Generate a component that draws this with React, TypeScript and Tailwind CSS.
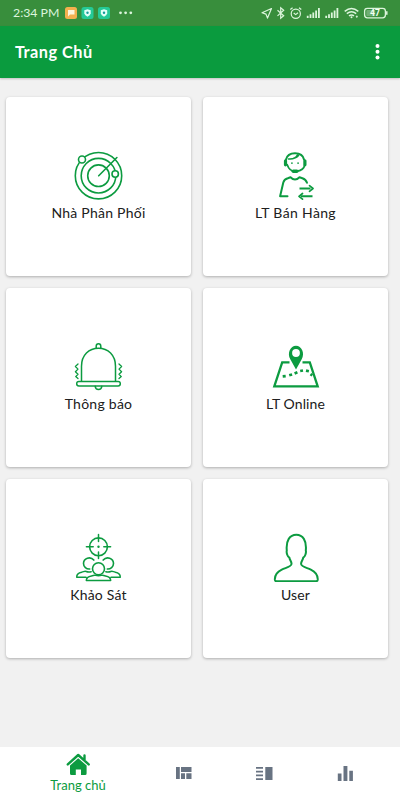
import type { ReactNode } from "react";

function Status() {
  return (
    <header className="flex h-[26px] shrink-0 items-center bg-[#388e3c] pl-[13px] text-[#dcf5dc]">
      <span className="w-[47px] whitespace-nowrap text-[12.3px] leading-none">2:34 PM</span>
      <svg className="ml-[4px] h-[14px] w-[78px]" viewBox="64 6 78 14">
        <rect x="65" y="7" width="12" height="12" rx="2.5" fill="#f4b04f" />
        <path d="M68 10h6.5v4.5h-4.5l-2 2z" fill="#fff5dc" />
        <rect x="81.500" y="7" width="12" height="12" rx="2.5" fill="#24c996" />
        <path d="M84.300 10.200l3.200-1 3.200 1v3.300q-.5 2-3.200 3.200-2.700-1.200-3.200-3.200z" fill="#e2fff8" />
        <circle cx="87.500" cy="12.800" r="1.200" fill="#149b9b" />
        <rect x="98" y="7" width="12" height="12" rx="2.500" fill="#24c996" />
        <path d="M100.800 10.200l3.200-1 3.200 1v3.300q-.5 2-3.200 3.200-2.700-1.200-3.200-3.200z" fill="#e2fff8" />
        <circle cx="104" cy="12.800" r="1.200" fill="#149b9b" />
        <g fill="#dcf5dc"><circle cx="120.500" cy="12.800" r="1.400" /><circle cx="125.600" cy="12.800" r="1.400" /><circle cx="130.800" cy="12.800" r="1.400" /></g>
      </svg>
      <svg className="ml-auto mr-[10px] h-[16px] w-[130px]" viewBox="260 5 130 16" fill="none" stroke="#dcf5dc" strokeWidth="1.2">
        <path d="M271.500 8.500l-9.500 4.300 4 1.300 1.500 4z" strokeLinejoin="round" />
        <path d="M277.500 10.200l6.200 5.600-3 2.500V7.800l3 2.500-6.200 5.600" />
        <circle cx="295.800" cy="13.800" r="4.600" />
        <path d="M290.300 9.500l2.300-1.800M301.300 9.500L299 7.700M293.700 13l2 1.600 2.300-1.800" />
        <path d="M307.700 15.800v2.200M310.500 14.300V18M313.300 12.500V18M316.100 10.500V18M318.900 8V18M326.200 15.800v2.200M329 14.300V18M331.800 12.500V18M334.600 10.500V18M337.400 8V18" strokeWidth="1.800" />
        <path d="M344.700 11.300q6.800-5.400 13.600 0M346.800 13.600q4.700-3.600 9.400 0M349 15.800q2.500-1.800 5 0" strokeWidth="1.500" />
        <circle cx="351.500" cy="17.300" r="1" fill="#dcf5dc" stroke="none" />
        <path d="M355.800 16.500h2M356.800 15.500v2.500" strokeWidth=".8" />
        <rect x="364.600" y="8.300" width="20.800" height="9.500" rx="2.800" strokeWidth="1.300" />
        <rect x="366.300" y="10" width="9" height="6.200" rx="1" fill="#6fae72" stroke="none" />
        <path d="M386.800 11.200v3.600" strokeWidth="1.500" />
        <text x="375" y="16" textAnchor="middle" fill="#f2fff2" stroke="none" fontSize="8.500" fontWeight="700" fontFamily="Roboto, sans-serif">47</text>
      </svg>
    </header>
  );
}

function Icon({ box, children }: { box: string; children: ReactNode }) {
  return (
    <svg className="h-[49px] w-[49px] shrink-0" viewBox={box} fill="none" stroke="#0c9b40" strokeWidth="1.600" strokeLinecap="round" strokeLinejoin="round">
      {children}
    </svg>
  );
}

const radar = (
  <Icon box="74 151 49 49">
    <circle cx="98.500" cy="175.700" r="23.200" />
    <circle cx="98.500" cy="175.700" r="17.300" />
    <circle cx="98.500" cy="175.700" r="10.800" />
    <path d="M98.700 175.800l18.200-18.300" />
    <circle cx="82" cy="159.500" r="3.500" fill="white" />
    <circle cx="115.200" cy="174" r="3.200" fill="white" />
  </Icon>
);

const agent = (
  <Icon box="271 151 49 49">
    <path d="M286 159.500C287 155.300 290.800 153.200 295 153.200s8.100 2.100 9 6.300" strokeWidth="2" />
    <path d="M287.200 164.500c.8 3 2.400 5 4.700 6.200M288.500 159c4.200.4 7.700-1.500 9-4.100M293.500 158.300c2.700-.3 4.500-1.800 5.200-3.300" strokeWidth="1.500" />
    <path d="M285.500 160.800v4M304.900 160.800v4" strokeWidth="3.200" />
    <path d="M304.900 164.500c-.8 4-3.600 6.400-8.500 6.700" strokeWidth="1.700" />
    <path d="M293.300 171.200h3.500" strokeWidth="3.500" />
    <path d="M291 163.200h1.800M297.200 163.200h1.800" strokeWidth="1.300" strokeLinecap="butt" />
    <path d="M287.500 196.300h-7.400l3.200-13.800c.7-2.600 2.300-3.600 4.500-4.200l2.700-1q4.500 4.400 9 0l2.900 1c2.400.8 3.800 2 4.600 4.500" strokeWidth="2" />
    <path d="M299.500 188.500h11M301 196.300h11.500" strokeWidth="2" strokeLinecap="butt" />
    <path d="M309.500 185.700l3.500 2.800-3.500 2.800M302.500 193.500l-3.500 2.800 3.500 2.800" strokeWidth="1.700" />
  </Icon>
);

const bell = (
  <Icon box="74 342 49 49">
    <path d="M81.500 381v-14.800c0-11 7.500-18 17-18s17 7 17 18V381M96.200 347.800v-1.500q0-2.500 2.300-2.500t2.300 2.500v1.500M95.200 386.200q.3 3.300 3.300 3.300t3.300-3.300" strokeWidth="1.500" />
    <rect x="76.700" y="381.400" width="43.600" height="4.600" rx="2.200" strokeWidth="1.500" />
    <path d="M78 364l-2.600 2.500 2.600 2.600-2.600 2.700 2.600 2.500-2.300 2.300 2.300 2M119 364l2.600 2.500-2.600 2.600 2.600 2.700-2.600 2.500 2.300 2.300-2.300 2" strokeWidth="1.300" />
  </Icon>
);

const map = (
  <Icon box="271 342 49 49">
    <path d="M289.500 362.300h-7.300L274.300 386.300h43.400l-7.900-24h-7.300" strokeWidth="2.300" strokeLinecap="butt" strokeLinejoin="miter" />
    <path d="M296 369.500l-5.700-10.200c-3.500-6 .1-13.500 5.700-13.500s9.200 7.500 5.700 13.500zM299.900 353a3.900 3.900 0 1 0-7.800 0 3.900 3.900 0 0 0 7.800 0" fill="#0c9b40" fillRule="evenodd" stroke="none" />
    <path d="M282.700 376.400l3-.3M289.200 375.300l2.900-.8M294.600 373.500l2.800-1.200M300.200 371l2.800-.5M306 370.600l2.900.7M310.500 374.200l1.800 1.300" strokeWidth="2.700" strokeLinecap="butt" />
  </Icon>
);

const target = (
  <Icon box="74 533 49 49">
    <circle cx="98.500" cy="546.800" r="8.900" />
    <path d="M98.500 534.500v7M98.500 552v6.500M86.400 546.800h6.800M103.800 546.800h6.800" strokeWidth="1.500" />
    <circle cx="98.500" cy="546.800" r="1.200" fill="#0c9b40" stroke="none" />
    <circle cx="98.500" cy="568.700" r="6" />
    <path d="M89.700 569c-3.300.3-6.200-2.200-6.200-5.500 0-5.200 6.800-7.600 10.300-3.400M107.300 569c3.300.3 6.200-2.200 6.200-5.500 0-5.200-6.800-7.600-10.300-3.400" />
    <path d="M86 577.300h-9.300c-.1-3.200 1.600-4.600 5-5.100 2-.3 2.700-1.400 4.500-.7 1.700.7 3.300.7 5 .2M111 577.300h9.300c.1-3.200-1.600-4.600-5-5.100-2-.3-2.700-1.400-4.500-.7-1.700.7-3.300.7-5 .2M86.300 580.500c0-2.900 1.800-4 5.200-4.500 2-.3 2.400-1.200 4-.6 2 .6 4 .6 6 0 1.600-.6 2 .3 4 .6 3.400.5 5.200 1.600 5.200 4.500z" strokeWidth="1.450" />
  </Icon>
);

const user = (
  <Icon box="271 533 49 49">
    <path d="M291.500 564c.2-2.200-1.600-3.500-2.100-6.300-2-1.200-3.200-4.900-2.600-7.200-1-10 3-15.700 9.500-15.700s10.500 5.700 9.500 15.700c.6 2.300-.6 6-2.600 7.200-.5 2.800-2.300 4.100-2.100 6.300.2 2.700 5.400 3.600 9.700 5.600 5.200 2.500 7.200 6.300 6.900 10.300-.1.900-.7 1.300-1.600 1.300h-39.600c-.9 0-1.500-.4-1.600-1.300-.3-4 1.700-7.800 6.900-10.300 4.300-2 9.500-2.900 9.700-5.600z" strokeWidth="2" />
  </Icon>
);

function Card({ label, icon, spacing = "" }: { label: string; icon: ReactNode; spacing?: string }) {
  return (
    <section className="flex flex-col items-center rounded-[4px] bg-white pt-[54px] shadow-[0_1px_3px_rgba(0,0,0,0.28)]">
      {icon}
      <h2 className={`mt-[3px] whitespace-nowrap text-[14px] leading-5 text-[#202020] ${spacing}`}>{label}</h2>
    </section>
  );
}

export default function App() {
  return (
    <div className="flex h-[800px] w-[400px] flex-col overflow-hidden bg-[#f1f1f1] font-['Lato','Open_Sans',sans-serif]">
      <Status />
      <div className="flex h-[52px] shrink-0 items-center bg-[#0a9b3e] pl-[15px] text-white shadow-[0_1px_2px_rgba(0,0,0,0.2)]">
        <h1 className="text-[16.300px] font-bold tracking-[0.500px]">Trang Chủ</h1>
        <svg className="ml-auto mr-[18px] h-5 w-[9px]" viewBox="0 0 9 20" fill="white">
          <circle cx="4.500" cy="4" r="2" /><circle cx="4.500" cy="9.800" r="2" /><circle cx="4.500" cy="15.600" r="2" />
        </svg>
      </div>
      <main className="grid flex-1 auto-rows-[179px] grid-cols-[185px_185px] content-start gap-3 pl-1.5 pt-[19px]">
        <Card label="Nhà Phân Phối" icon={radar} spacing="tracking-[0.25px]" />
        <Card label="LT Bán Hàng" icon={agent} spacing="tracking-[0.35px]" />
        <Card label="Thông báo" icon={bell} spacing="tracking-[0.25px]" />
        <Card label="LT Online" icon={map} spacing="tracking-[0.1px]" />
        <Card label="Khảo Sát" icon={target} spacing="tracking-[0.2px]" />
        <Card label="User" icon={user} spacing="tracking-[0.1px]" />
      </main>
      <nav className="flex h-[53px] shrink-0 items-center bg-white text-[#687382]">
        <div className="flex w-[156px] flex-col items-center text-[#0c9b40]">
          <svg className="h-[24px] w-[25px]" viewBox="66 752 25 24" fill="none" stroke="#0c9b40">
            <path d="M67.800 764.400L78.200 755l10.500 9.400M84.500 755.500v5" strokeWidth="2.400" strokeLinecap="round" strokeLinejoin="round" />
            <path d="M70 765.500l8.200-7.200 8.400 7.200v8q0 1.500-1.500 1.500H81v-5.500h-5.200v5.500h-4.300q-1.500 0-1.500-1.500z" fill="#0c9b40" stroke="none" />
          </svg>
          <span className="-mt-px whitespace-nowrap text-[13px] leading-[20px]">Trang chủ</span>
        </div>
        <svg className="ml-[19px] h-[16px] w-[18px]" viewBox="175 766 18 16" fill="currentColor">
          <path d="M176 767h3.800v12H176zM181 767h10.500v5H181zM181 773.300h4v5.700h-4zM186.300 773.300h5.200v5.700h-5.200z" />
        </svg>
        <svg className="ml-[62px] h-[16px] w-[18px]" viewBox="255 766 18 16" fill="currentColor">
          <path d="M256 767h7v1.800h-7zM256 770.700h7v1.800h-7zM256 774.500h7v1.800h-7zM256 778.200h7v1.800h-7zM265.300 767h7.200v13h-7.200z" />
        </svg>
        <svg className="ml-[63px] h-[18px] w-[18px]" viewBox="336 765 18 18" fill="currentColor">
          <path d="M337.800 773.500h3.700v7.500h-3.700zM343.500 766h3.900v15h-3.900zM349.300 770.800h3.600V781h-3.600z" />
        </svg>
      </nav>
    </div>
  );
}
